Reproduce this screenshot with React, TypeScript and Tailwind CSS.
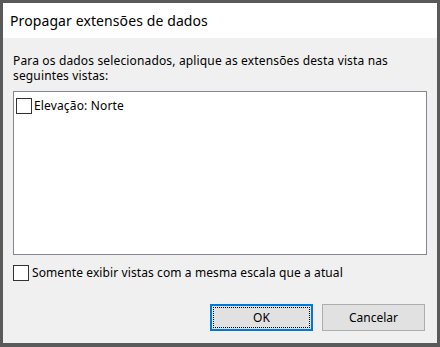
import React from "react";

function CheckBox() {
  return <div className="w-4 h-4 shrink-0 border border-[#333333] bg-white" />;
}

export default function App() {
  return (
    <div
      className="w-[440px] h-[347px] bg-[#5a5a5a] pt-[3px] pl-[3px] pr-[3px] pb-[4px] text-[#000000]"
      style={{ fontFamily: '"Noto Sans", "Segoe UI", sans-serif' }}
    >
      <div className="flex flex-col w-full h-full bg-[#f0f0f0]">
        <div className="h-[35px] bg-white flex items-center pl-[7px] text-[14px] tracking-[0.1px]">
          Propagar extensões de dados
        </div>
        <div className="flex flex-col px-[10px] flex-1">
          <p className="mt-[15px] text-[12px] leading-[15px] tracking-[0.15px]">
            Para os dados selecionados, aplique as extensões desta vista nas seguintes vistas:
          </p>
          <div className="mt-[8px] h-[164px] border border-[#828790] bg-white pl-[2px] pt-[5px]">
            <label className="flex items-center gap-[2px] text-[12px] tracking-[0.15px]">
              <CheckBox />
              <span>Elevação: Norte</span>
            </label>
          </div>
          <label className="mt-[9px] flex items-center gap-[3px] text-[12px] tracking-[0.1px]">
            <CheckBox />
            <span>Somente exibir vistas com a mesma escala que a atual</span>
          </label>
          <div className="mt-auto mb-[12px] mr-[2px] flex justify-end gap-[9px] text-[12px]">
            <button className="relative w-[103px] h-[27px] border-2 border-[#0078d7] bg-[#e1e1e1]">
              <span className="absolute inset-[1px] border border-dotted border-black" />
              OK
            </button>
            <button className="w-[103px] h-[27px] border border-[#adadad] bg-[#e1e1e1]">
              Cancelar
            </button>
          </div>
        </div>
      </div>
    </div>
  );
}
